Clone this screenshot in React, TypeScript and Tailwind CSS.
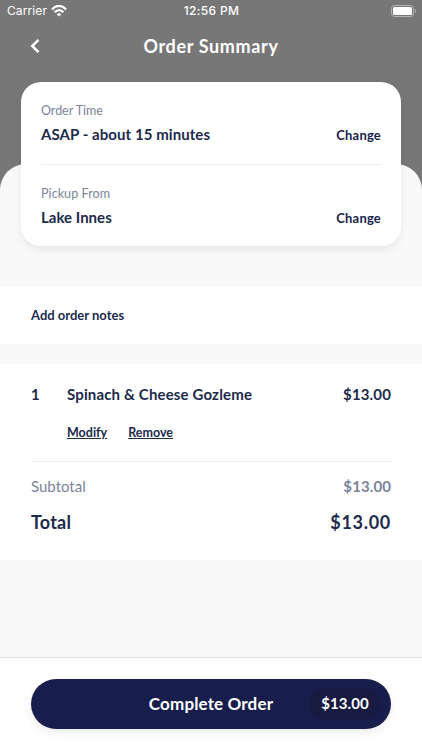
import React from "react";

interface DetailRowProps {
  label: string;
  value: string;
  labelClass: string;
  valueClass: string;
}

const DetailRow: React.FC<DetailRowProps> = ({ label, value, labelClass, valueClass }) => (
  <div className="flex h-[82px] justify-between pt-[21px]">
    <div>
      <p className={`text-[12.5px] leading-4 text-[#7b849b] ${labelClass}`}>{label}</p>
      <p className={`mt-[5px] text-[15px] leading-5 font-bold ${valueClass}`}>{value}</p>
    </div>
    <button className="mt-6 h-4 text-[13px] leading-4 font-bold tracking-[0.2px] text-[#181e4b]">Change</button>
  </div>
);

const StatusBar: React.FC = () => (
  <div className="grid h-[22px] grid-cols-3 items-center pr-[5px] pl-[7px] font-[Inter,sans-serif] text-white">
    <div className="flex items-center gap-1">
      <span className="text-[12px] leading-4 tracking-[0.1px]">Carrier</span>
      <svg width="16" height="12" viewBox="0 0 16 12" fill="none" stroke="currentColor" strokeWidth="2.3">
        <path d="M1 4.4C5-.2 11-.2 15 4.4" />
        <path d="M3.6 7.2c2.6-2.9 6.2-2.9 8.8 0" />
        <path d="M5.7 9.2c1.3-1.4 3.3-1.4 4.6 0L8 11.6z" fill="currentColor" stroke="none" />
      </svg>
    </div>
    <span className="-ml-px text-center text-[12px] leading-4 font-medium tracking-[0.35px] whitespace-nowrap">12:56 PM</span>
    <svg className="justify-self-end" width="26" height="12" viewBox="0 0 26 12">
      <rect x=".5" y=".5" width="22" height="11" rx="3" fill="none" stroke="#b5b5b5" />
      <rect x="2" y="2" width="19" height="8" rx="1.5" fill="white" />
      <path d="M24 4v4c1.4-.7 1.4-3.3 0-4z" fill="#b5b5b5" />
    </svg>
  </div>
);

export default function App() {
  return (
    <div className="flex h-[750px] w-full flex-col overflow-hidden bg-[#777777] font-[Lato,sans-serif] text-[#202a4c]">
      <StatusBar />
      <header className="grid h-12 shrink-0 grid-cols-[31px_1fr_31px] items-center text-white">
        <button className="flex justify-end" aria-label="Back">
          <svg className="-mr-[9px]" width="10" height="16" viewBox="0 0 10 16" fill="none" stroke="currentColor" strokeWidth="2.5">
            <path d="M8.5 1.8L2.2 8l6.3 6.2" />
          </svg>
        </button>
        <h1 className="text-center text-[18px] leading-6 font-bold tracking-[0.65px]">Order Summary</h1>
      </header>

      <main className="mt-[94px] flex flex-1 flex-col rounded-t-[26px] bg-[#f9f9f9]">
        <section className="mx-[21px] -mt-[82px] h-[164px] rounded-[20px] bg-white px-5 shadow-[0_4px_8px_rgba(0,0,0,0.07)]">
          <div className="border-b border-[#f1f1f1]">
            <DetailRow label="Order Time" value="ASAP - about 15 minutes" labelClass="-tracking-[0.03px]" valueClass="tracking-[0.07px]" />
          </div>
          <DetailRow label="Pickup From" value="Lake Innes" labelClass="tracking-[0.08px]" valueClass="tracking-[0.02px]" />
        </section>

        <section className="mt-[41px] flex h-[57px] items-center bg-white px-[31px] pb-0.5">
          <button className="text-[13px] leading-4 font-bold">Add order notes</button>
        </section>

        <section className="mt-5 h-[196px] bg-white px-[31px] pt-[19px]">
          <div className="flex h-[79px] border-b border-[#ececec]">
            <span className="w-9 text-[15px] leading-[22px] font-bold">1</span>
            <div className="flex-1">
              <p className="text-[15px] leading-[22px] font-bold tracking-[0.15px]">Spinach &amp; Cheese Gozleme</p>
              <div className="mt-5 flex gap-[21px] text-[12.5px] leading-4 font-bold">
                <button className="underline underline-offset-1">Modify</button>
                <button className="underline underline-offset-1">Remove</button>
              </div>
            </div>
            <span className="text-[15px] leading-[22px] font-bold tracking-[0.15px]">$13.00</span>
          </div>
          <div className="mt-[15px] flex justify-between text-[15px] leading-[18px] text-[#7b849b]">
            <span>Subtotal</span>
            <span className="font-bold tracking-[0.1px]">$13.00</span>
          </div>
          <div className="mt-[15px] flex justify-between text-[18px] leading-6 font-bold">
            <span className="tracking-[0.2px]">Total</span>
            <span className="tracking-[0.7px]">$13.00</span>
          </div>
        </section>
      </main>

      <footer className="h-[93px] shrink-0 border-t border-[#dedede] bg-white px-[31px] pt-[21px]">
        <button className="grid h-[50px] w-full grid-cols-[82px_1fr_82px] items-center rounded-full bg-[#181e4b] text-white shadow-[0_4px_8px_rgba(0,0,0,0.08)]">
          <span className="col-start-2 text-[17px] leading-6 font-bold tracking-[0.15px]">Complete Order</span>
          <span className="mr-2.5 rounded-full bg-[#171b42] pb-0.5 text-[15px] leading-7 font-bold tracking-[0.1px]">$13.00</span>
        </button>
      </footer>
    </div>
  );
}
